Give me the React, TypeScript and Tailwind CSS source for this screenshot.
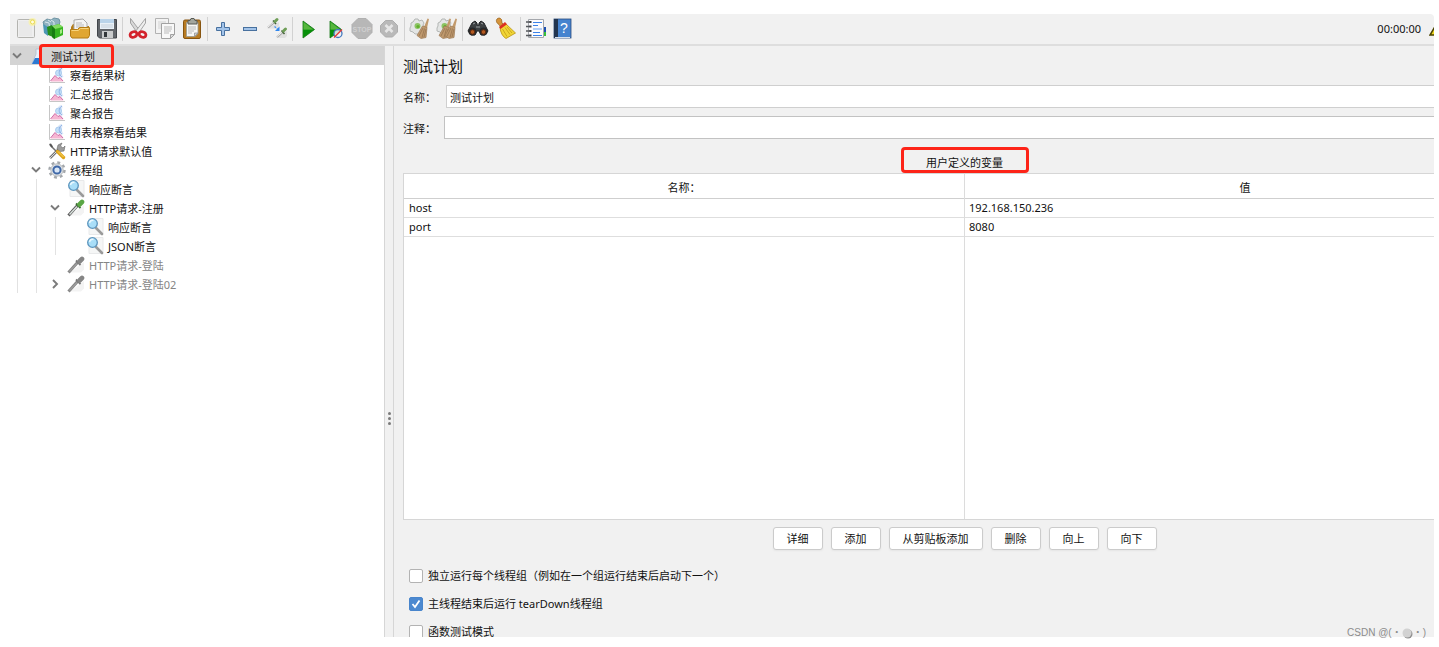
import { useState, type ReactNode } from "react";

function Svg({ children, size = 24 }: { children: ReactNode; size?: number }) {
  return (
    <svg width={size} height={size} viewBox={`0 0 ${size} ${size}`} fill="none" className="block shrink-0" aria-hidden="true">
      {children}
    </svg>
  );
}

/* ---------- toolbar icons (24 x 24) ---------- */

const NewIcon = () => (
  <Svg>
    <rect x="3.5" y="2.5" width="17" height="18" rx="1" fill="#efefef" stroke="#b4b4b0" />
    <path d="M5 4h13v15H5z" fill="#e9e9e9" />
    <circle cx="18.5" cy="5" r="4" fill="#fbf3a0" opacity=".7" />
    <circle cx="18.5" cy="5" r="2" fill="#fffde0" stroke="#eedc4e" />
  </Svg>
);

const TemplatesIcon = () => (
  <Svg>
    <path d="M2 5l4-3 4 1 3-2 5 1 1 3-2 6-6 4-6-1z" fill="#8fb2c0" stroke="#6f94a3" />
    <path d="M4 5l4 1 1 7M10 3l3 2v6M7 3l3 2" stroke="#d9e8ee" />
    <path d="M2 7l5 3v9l-4-3z" fill="#4d97b5" />
    <path d="M6 10l5-2 1 12-5-2z" fill="#25901b" />
    <path d="M11 9l7-2 4 3v8l-9 4-2-2z" fill="#36b421" />
    <path d="M11 9l7-2 4 3-8 2z" fill="#84db62" />
    <path d="M11 9l3 3v10l-3-2z" fill="#177b12" />
    <path d="M19 13l2-1v4l-2 1z" fill="#a4ec85" />
  </Svg>
);

const OpenIcon = () => (
  <Svg>
    <path d="M3 10l2-3h5l2 2h9v11H3z" fill="#b57d18" />
    <path d="M6 3l9-1 4 4v9H6z" fill="#f4f4f4" stroke="#aaa" />
    <path d="M8 6h6M8 8h8M8 10h8" stroke="#bbb" />
    <path d="M2.500 12.500h7l2-2h10v8l-1.500 2.500h-16l-1.500-2z" fill="#e0a632" stroke="#b47c14" />
    <path d="M3.500 13.500h7l2-2h8" stroke="#f7d47d" />
  </Svg>
);

const SaveIcon = () => (
  <Svg>
    <path d="M2.500 2.500h19v18.500h-17l-2-2z" fill="#62666b" stroke="#42464b" />
    <rect x="5" y="2" width="14" height="10" fill="#e9f1f8" />
    <path d="M5 2h14v4H5z" fill="#bad4ea" />
    <path d="M6 8h12M6 10h12" stroke="#c5d0da" />
    <rect x="7" y="14" width="11" height="7" fill="#c9cbcc" />
    <rect x="9" y="15" width="3" height="5" fill="#33373b" />
  </Svg>
);

const CutIcon = () => (
  <Svg>
    <path d="M4.500 1.500l10 13-2.500 2.500L4.500 6z" fill="#d8d8d8" stroke="#919191" strokeWidth=".8" />
    <path d="M19.500 1.500L9.500 14.500l2.500 2.500L19.500 6z" fill="#eee" stroke="#919191" strokeWidth=".8" />
    <ellipse cx="7.500" cy="17.500" rx="3.500" ry="2.600" transform="rotate(-20 7.500 17.500)" stroke="#d3222c" strokeWidth="2.800" />
    <ellipse cx="16.500" cy="17.500" rx="3.500" ry="2.600" transform="rotate(20 16.500 17.500)" stroke="#d3222c" strokeWidth="2.800" />
  </Svg>
);

const CopyIcon = () => (
  <Svg>
    <path d="M2.500 1.500h13v15h-13z" fill="#f3f3f3" stroke="#b2b2b2" />
    <path d="M5 5h8M5 7h8M5 9h5M5 11h5" stroke="#d3d3d3" />
    <path d="M8.500 6.500h13v11l-4 4h-9z" fill="#f8f8f8" stroke="#a2a2a2" />
    <path d="M11 10h8M11 12h8M11 14h7M11 16h5" stroke="#bbb" />
    <path d="M21.500 17.500h-4v4z" fill="#ddd" stroke="#a2a2a2" />
  </Svg>
);

const PasteIcon = () => (
  <Svg>
    <rect x="3.500" y="3" width="17" height="18.500" rx="1.500" fill="#b87b22" stroke="#875510" />
    <path d="M6.500 5.500h11.500v11l-3 3H6.500z" fill="#f7f7f5" stroke="#9a9a90" strokeWidth=".8" />
    <path d="M8 10h8M8 12h8M8 14h6M8 16h4" stroke="#b9b9b9" />
    <path d="M18 16h-3.500v3.500z" fill="#d5d5d5" stroke="#888" strokeWidth=".7" />
    <path d="M8 3.500h2l1-2h3l1 2h2V7H8z" fill="#a3a69e" stroke="#595b55" />
  </Svg>
);

const PlusIcon = () => (
  <Svg>
    <path d="M10.500 5.500h3v5h5v3h-5v5h-3v-5h-5v-3h5z" fill="#a2c3e9" stroke="#48719f" />
  </Svg>
);

const MinusIcon = () => (
  <Svg>
    <rect x="5.500" y="10.500" width="13" height="3" fill="#a2c3e9" stroke="#48719f" />
  </Svg>
);

const ToggleIcon = () => (
  <Svg>
    <path d="M2 11.500h10l2-2.500V5z" fill="#e0e0e0" />
    <path d="M11 21h9l2-2v-5z" fill="#e0e0e0" />
    <path d="M3 10.500L9 5.500" stroke="#a9a9a9" strokeWidth="2" />
    <path d="M3 10l6-5" stroke="#f4f4f4" />
    <path d="M8 3.500l3 3.500" stroke="#3f5d34" strokeWidth="1.500" />
    <path d="M10 4.500l2-2" stroke="#6f9e57" strokeWidth="3" strokeLinecap="round" />
    <path d="M12 20l6-5" stroke="#a9a9a9" strokeWidth="2" />
    <path d="M12 19.500l6-5" stroke="#f4f4f4" />
    <path d="M16.500 13.500l3 3.500" stroke="#3f5d34" strokeWidth="1.500" />
    <path d="M18.500 14l2-2" stroke="#6f9e57" strokeWidth="3" strokeLinecap="round" />
    <path d="M9.500 9.500l3 2.500" stroke="#4b94ef" strokeWidth="1.300" strokeDasharray="2 1" />
    <path d="M14.500 9.500v4.500H10z" fill="#2f86ee" />
  </Svg>
);

const PlayShape = () => (
  <>
    <path d="M7 4l11.500 8.500L7 21z" fill="#189c18" stroke="#137413" strokeWidth=".8" />
    <path d="M7.500 5l9.500 7.500H7.500z" fill="#56b63e" />
    <path d="M7.500 13h10L7.500 20z" fill="#068f08" />
  </>
);

const StartIcon = () => (
  <Svg>
    <PlayShape />
  </Svg>
);

const StartNoPauseIcon = () => (
  <Svg>
    <PlayShape />
    <circle cx="15" cy="16.500" r="4" fill="#f2f2f8" fillOpacity=".85" stroke="#4379bd" strokeWidth="1.300" />
    <path d="M11 20.500l8-8" stroke="#e23b36" strokeWidth="1.500" />
  </Svg>
);

const StopIcon = () => (
  <Svg>
    <path d="M8 1.500h8l6 6v8l-6 6H8l-6-6v-8z" fill="#b7b7b7" stroke="#b0b0b0" />
    <text x="12" y="14.500" textAnchor="middle" fontSize="7" fontWeight="700" fontFamily="Liberation Sans, sans-serif" fill="#cfcfcf">
      STOP
    </text>
  </Svg>
);

const ShutdownIcon = () => (
  <Svg>
    <path d="M8.500 3.500h7l5 5v6.500l-5 5h-7l-5-5V8.500z" fill="#b9b9b9" stroke="#adadad" />
    <path d="M8.500 8l7 7M15.500 8l-7 7" stroke="#e6e6e6" strokeWidth="2.600" />
  </Svg>
);

const Broom = ({ dx }: { dx: number }) => (
  <g transform={`translate(${dx} 0)`}>
    <path d="M18.500 1.500l1.500.500-2 9-3-1z" fill="#c29a6c" />
    <path d="M13.500 9l4.500 1.500-1 10-5 1-4-3z" fill="#c09a6e" stroke="#9c7a54" strokeWidth=".7" />
    <path d="M14 11l-4 8M15.500 11.500l-2.500 9M17 12l-2 8" stroke="#8f6f4c" strokeWidth=".7" />
  </g>
);

const Gear = () => (
  <>
    <path d="M3 6l2-1 2-3h3l1 2 3-1 2 3-1 2 2 3-2 3-3 1-2 2H7l-2-2-3-1V11l1-2z" fill="#e3e5e4" stroke="#b3b6b4" />
    <circle cx="9.500" cy="9" r="3" fill="#8cc464" />
    <circle cx="10" cy="9.500" r="1.600" fill="#5fb02a" />
  </>
);

const ClearIcon = () => (
  <Svg>
    <Gear />
    <Broom dx={1} />
  </Svg>
);

const ClearAllIcon = () => (
  <Svg>
    <Gear />
    <Broom dx={-4} />
    <Broom dx={2} />
  </Svg>
);

const SearchIcon = () => (
  <Svg>
    <path d="M6 6l3-2 2 2v2h2V6l2-2 3 2 4 8-3 4h-4l-2-4h-2l-2 4H5l-3-4z" fill="#3d4042" stroke="#242628" />
    <path d="M7 7l2-1M15 6l2 1M10 10h4" stroke="#9ba0a2" />
    <circle cx="6.500" cy="14.500" r="4" fill="#26282a" />
    <circle cx="17.500" cy="14.500" r="4" fill="#26282a" />
    <circle cx="6.500" cy="15" r="2.300" fill="#b45a20" stroke="#5c2a10" />
    <circle cx="17.500" cy="15" r="2.300" fill="#b45a20" stroke="#5c2a10" />
  </Svg>
);

const ResetSearchIcon = () => (
  <Svg>
    <path d="M4 2c1.500-1.500 3.500-1 4.500.500L9 6l2 2-3 2.500-2-3C4 6.500 2.500 4 4 2z" fill="#d5943c" stroke="#9c6420" strokeWidth=".8" />
    <path d="M7 10.500l5.500-4 10 9.500-9.500 5.500c-3.500-2-5.500-6-6-11z" fill="#f1d637" stroke="#b79210" strokeWidth=".8" />
    <path d="M9.500 12l4.500 7.500M12 10.500l5 7M14 10l5 6" stroke="#cba81e" />
    <path d="M6 10l6-5 2 2.200-6.500 4.800z" fill="#dc3022" />
  </Svg>
);

const FunctionHelperIcon = () => (
  <Svg>
    <path d="M4.500 2.500h15v18h-15z" fill="#fbfbfd" stroke="#a4a7ac" />
    <path d="M2 5h4M2 9.500h4M2 14h4M2 18.500h4" stroke="#55585c" strokeWidth="1.300" />
    <path d="M5.500 4h2v2h-2zM5.500 8.500h2v2h-2zM5.500 13h2v2h-2zM5.500 17.500h2v2h-2z" fill="#3c3f43" />
    <path d="M9 5.500h9M9 8.500h5M9 15.500h7M9 18.500h9" stroke="#3b82e8" strokeWidth="1.200" />
    <path d="M9 12h9" stroke="#9cc2f5" strokeWidth="1.500" />
    <path d="M20 10h2v5h-2z" fill="#1c4fb0" />
    <path d="M20 15h2v4h-2z" fill="#35c03a" />
  </Svg>
);

const HelpIcon = () => (
  <Svg>
    <rect x="3" y="2" width="17" height="19" fill="#4583cf" stroke="#2b4d7d" strokeWidth=".8" />
    <path d="M3 2h4v19H3z" fill="#22354f" />
    <path d="M4 21h15v-1H4z" fill="#d8e1ec" />
    <text x="13" y="16" textAnchor="middle" fontSize="14" fontFamily="Liberation Sans, sans-serif" fill="#fff">
      ?
    </text>
  </Svg>
);

/* ---------- tree icons (18 x 18) ---------- */

const FlaskIcon = () => (
  <Svg size={18}>
    <path d="M7 2h4v5l5 9.500H3L7 7z" fill="#e8f1fb" stroke="#b7c5d4" />
    <path d="M6 11h7l3 6H3z" fill="#2e79d2" />
  </Svg>
);

const ReportIcon = () => (
  <Svg size={18}>
    <path d="M1.500 1v15.500H17" stroke="#c6c6c6" />
    <path d="M10.500 2.500c2-2 4-1.500 4 .500l-1 4 2 4-3 1-3-3z" fill="#dce8f8" />
    <circle cx="10.500" cy="7" r="3" fill="#c4e0f8" stroke="#9fc3ea" strokeWidth=".8" />
    <path d="M14 2c-3.500 2-4 6.500 0 9" stroke="#8bafe6" />
    <path d="M2.500 15.500L7 9.500l3 3 2-1 3.500 4z" fill="#f6b6d2" />
    <path d="M2.500 15L7 9.500l3 3 2-1 3 3.500" stroke="#cf6ba6" />
  </Svg>
);

const ToolsIcon = () => (
  <Svg size={18}>
    <path d="M2 16l9-9" stroke="#757575" strokeWidth="2.600" />
    <path d="M2 16l9-9" stroke="#d9d9d9" />
    <path d="M10 3l4-2-1.500 3L15 6l2-2-1 5-4 .5L9 7z" fill="#9c9c9c" stroke="#666" strokeWidth=".6" />
    <path d="M2 3l7 7" stroke="#6d6d6d" strokeWidth="1.500" />
    <path d="M1 2l2-.5 2 3-1.500 1z" fill="#555" />
    <path d="M9.500 9.500l6 6" stroke="#e0a51a" strokeWidth="3.400" strokeLinecap="round" />
    <path d="M10 9.500l5.500 5.500" stroke="#f8d865" />
  </Svg>
);

const ThreadGroupIcon = () => (
  <Svg size={18}>
    <circle cx="9" cy="9" r="7.500" stroke="#a3a7ab" strokeWidth="2.400" strokeDasharray="2.900 3" />
    <circle cx="9" cy="9" r="6.200" fill="#dfe2e4" stroke="#a9adb1" strokeWidth=".8" />
    <circle cx="9" cy="9" r="3.600" fill="#d8e6f6" stroke="#3f68a8" strokeWidth="2" />
  </Svg>
);

const AssertionIcon = () => (
  <Svg size={18}>
    <path d="M3 .5h14v16H3z" fill="#f5f6f6" stroke="#e8e9ea" />
    <path d="M10 10l6 6" stroke="#9a9a9a" strokeWidth="2.600" strokeLinecap="round" />
    <circle cx="6.500" cy="5.500" r="4.800" fill="#a9def8" stroke="#5b94bd" strokeWidth="1.300" />
    <path d="M3.500 5c.5-2 2-3 4-2.500" stroke="#e9f8ff" strokeWidth="1.500" />
  </Svg>
);

const SamplerIcon = ({ disabled = false }: { disabled?: boolean }) => (
  <Svg size={18}>
    <path d="M3 16.500h11l3-3V6z" fill="#f3f3f3" />
    <path d="M1.500 16.500l9-10" stroke={disabled ? "#868686" : "#5c5c5c"} strokeWidth="3" />
    <path d="M2.500 15.500l7.500-8" stroke={disabled ? "#9c9c9c" : "#d9e2dd"} strokeWidth="1.400" />
    <path d="M9 4.500l4.500 4.500" stroke={disabled ? "#767676" : "#3c6a34"} strokeWidth="1.800" />
    <path d="M12.500 5.500l2.500-2.500" stroke={disabled ? "#858585" : "#5aa644"} strokeWidth="4.600" strokeLinecap="round" />
  </Svg>
);

/* ---------- toolbar ---------- */

const toolGroups: { label: string; icon: ReactNode; disabled?: boolean }[][] = [
  [
    { label: "新建", icon: <NewIcon /> },
    { label: "模板", icon: <TemplatesIcon /> },
    { label: "打开", icon: <OpenIcon /> },
    { label: "保存", icon: <SaveIcon /> },
  ],
  [
    { label: "剪切", icon: <CutIcon /> },
    { label: "复制", icon: <CopyIcon /> },
    { label: "粘贴", icon: <PasteIcon /> },
  ],
  [
    { label: "全部展开", icon: <PlusIcon /> },
    { label: "全部折叠", icon: <MinusIcon /> },
    { label: "切换", icon: <ToggleIcon /> },
  ],
  [
    { label: "启动", icon: <StartIcon /> },
    { label: "不停顿开始", icon: <StartNoPauseIcon /> },
    { label: "停止", icon: <StopIcon />, disabled: true },
    { label: "关闭", icon: <ShutdownIcon />, disabled: true },
  ],
  [
    { label: "清除", icon: <ClearIcon /> },
    { label: "清除全部", icon: <ClearAllIcon /> },
  ],
  [
    { label: "搜索", icon: <SearchIcon /> },
    { label: "重置搜索", icon: <ResetSearchIcon /> },
  ],
  [
    { label: "函数助手", icon: <FunctionHelperIcon /> },
    { label: "帮助", icon: <HelpIcon /> },
  ],
];

function Toolbar() {
  return (
    <header className="flex h-8 shrink-0 items-center overflow-hidden rounded-tr border-b-2 border-[#dedede] bg-[#f1f1f1] pl-[2px]">
      {toolGroups.map((group, i) => (
        <div key={i} className="flex items-center">
          {i > 0 && (
            <div className="flex w-1 justify-center">
              <div className="h-6 w-px bg-[#d2d2d2]" />
            </div>
          )}
          {group.map((tool) => (
            <button key={tool.label} type="button" aria-label={tool.label} disabled={tool.disabled} className="flex w-[27px] justify-center">
              {tool.icon}
            </button>
          ))}
        </div>
      ))}
      <div className="ml-auto flex items-center gap-2">
        <span>00:00:00</span>
        <div className="w-[5px] overflow-hidden">
          <Svg size={16}>
            <path d="M8 2l7 12H1z" fill="#ecd51f" stroke="#4a4300" strokeWidth="1.500" />
          </Svg>
        </div>
      </div>
    </header>
  );
}

/* ---------- tree ---------- */

type Node = {
  label: string;
  icon: ReactNode;
  depth: number;
  state?: "open" | "closed";
  disabled?: boolean;
  selected?: boolean;
};

const nodes: Node[] = [
  { label: "测试计划", icon: <FlaskIcon />, depth: 0, state: "open", selected: true },
  { label: "察看结果树", icon: <ReportIcon />, depth: 1 },
  { label: "汇总报告", icon: <ReportIcon />, depth: 1 },
  { label: "聚合报告", icon: <ReportIcon />, depth: 1 },
  { label: "用表格察看结果", icon: <ReportIcon />, depth: 1 },
  { label: "HTTP请求默认值", icon: <ToolsIcon />, depth: 1 },
  { label: "线程组", icon: <ThreadGroupIcon />, depth: 1, state: "open" },
  { label: "响应断言", icon: <AssertionIcon />, depth: 2 },
  { label: "HTTP请求-注册", icon: <SamplerIcon />, depth: 2, state: "open" },
  { label: "响应断言", icon: <AssertionIcon />, depth: 3 },
  { label: "JSON断言", icon: <AssertionIcon />, depth: 3 },
  { label: "HTTP请求-登陆", icon: <SamplerIcon disabled />, depth: 2, disabled: true },
  { label: "HTTP请求-登陆02", icon: <SamplerIcon disabled />, depth: 2, state: "closed", disabled: true },
];

function TreeRow({ node }: { node: Node }) {
  return (
    <li className={`flex h-[19px] items-center whitespace-nowrap ${node.selected ? "bg-[#d4d4d4]" : ""}`}>
      {Array.from({ length: node.depth }, (_, i) => (
        <div key={i} className="flex h-full w-[19px] pl-[7px]">
          <div className="w-px bg-[#e2e2e2]" />
        </div>
      ))}
      <div className="flex w-[19px] pl-[2px]">
        {node.state && (
          <button type="button" aria-label={node.label} aria-expanded={node.state === "open"}>
            <Svg size={10}>
              <path d={node.state === "open" ? "M1 2.500l4 4 4-4" : "M3 1l4 4-4 4"} stroke="#7b7b7b" strokeWidth="1.900" />
            </Svg>
          </button>
        )}
      </div>
      {node.icon}
      <span className={`relative ml-1 pt-[2px] ${node.disabled ? "text-[#858585]" : ""}`}>
        {node.selected && <span className="absolute -top-[3px] -left-3 h-6 w-[75px] rounded-sm border-3 border-[#fd2418] bg-[#d4d4d4]" />}
        <span className="relative">{node.label}</span>
      </span>
    </li>
  );
}

/* ---------- editor ---------- */

const variables = [
  { name: "host", value: "192.168.150.236" },
  { name: "port", value: "8080" },
];

const actions = ["详细", "添加", "从剪贴板添加", "删除", "向上", "向下"];

function Option({ label, initial = false }: { label: string; initial?: boolean }) {
  const [checked, setChecked] = useState(initial);
  return (
    <label className="flex h-7 items-center gap-[5px]">
      <span className="relative flex size-[14px]">
        <input
          type="checkbox"
          checked={checked}
          onChange={(e) => setChecked(e.target.checked)}
          className="size-full appearance-none rounded-[2px] border border-[#b3b3b3] bg-white checked:border-[#4885cc] checked:bg-[#4c89d0]"
        />
        {checked && (
          <span className="pointer-events-none absolute inset-0">
            <Svg size={14}>
              <path d="M3.500 7l2.500 3 4.500-6.500" stroke="#fff" strokeWidth="1.800" />
            </Svg>
          </span>
        )}
      </span>
      {label}
    </label>
  );
}

function PlanEditor() {
  return (
    <main className="min-w-0 flex-1 overflow-hidden bg-[#f1f1f1]">
      {/* The form is wider than its viewport and runs on under the right edge. */}
      <div className="flex h-full w-[110%] flex-col pr-3 pl-[9px]">
        <h1 className="mt-2 text-[15px] leading-6">测试计划</h1>
        <div className="mt-[7px] flex items-center">
          <label htmlFor="plan-name" className="w-[43px] pt-[2px]">
            名称：
          </label>
          <input id="plan-name" defaultValue="测试计划" className="h-[23px] min-w-0 flex-1 border border-[#cfcfcf] bg-white px-[3px]" />
        </div>
        <div className="mt-2 flex items-center">
          <label htmlFor="plan-comment" className="w-[41px] pt-[2px]">
            注释：
          </label>
          <input id="plan-comment" className="h-[23px] min-w-0 flex-1 border border-[#c2c2c2] bg-white px-[3px]" />
        </div>
        <div className="mt-[14px] flex justify-center">
          <h2 className="relative leading-5">
            <span className="absolute -top-[6px] -left-[25px] h-[26px] w-32 rounded-sm border-3 border-[#fd2418]" />
            用户定义的变量
          </h2>
        </div>
        <div className="flex min-h-0 flex-1 border border-[#d6d6d6] bg-white">
          <table className="w-full table-fixed border-collapse">
            <thead>
              <tr className="h-6 border-b border-[#cfcfcf]">
                <th className="w-1/2 border-r border-[#dcdcdc] p-0 pt-1 font-normal">名称：</th>
                <th className="p-0 pt-1 font-normal">值</th>
              </tr>
            </thead>
            <tbody>
              {variables.map((v) => (
                <tr key={v.name} className="h-[19px] border-b border-[#dedede]">
                  <td className="border-r border-[#dcdcdc] px-[5px] py-0">{v.name}</td>
                  <td className="px-1 py-0">{v.value}</td>
                </tr>
              ))}
              <tr>
                <td className="border-r border-[#dcdcdc] p-0" />
                <td className="p-0" />
              </tr>
            </tbody>
          </table>
        </div>
        <div className="mt-[7px] flex justify-center gap-2">
          {actions.map((a) => (
            <button key={a} type="button" className="h-[23px] rounded-[3px] border border-[#cbcbcb] bg-white px-[13px] shadow-xs">
              {a}
            </button>
          ))}
        </div>
        <div className="mt-3 h-[75px] pl-[6px]">
          <Option label="独立运行每个线程组（例如在一个组运行结束后启动下一个）" />
          <Option label="主线程结束后运行 tearDown线程组" initial />
          <Option label="函数测试模式" />
        </div>
      </div>
    </main>
  );
}

export default function App() {
  return (
    <div className="h-screen bg-white pt-[14px] pr-[5px] pb-[10px] pl-[10px] font-['Noto_Sans','Noto_Sans_CJK_SC',sans-serif] text-[11px] leading-4 text-[#111]">
      <div className="relative flex h-full flex-col">
        <Toolbar />
        <div className="flex min-h-0 flex-1">
          <nav className="w-[374px] shrink-0 bg-white">
            <ul>
              {nodes.map((n, i) => (
                <TreeRow key={i} node={n} />
              ))}
            </ul>
          </nav>
          <div className="flex w-[10px] shrink-0 flex-col items-center justify-center gap-[2px] border-x border-[#d6d6d6] bg-[#f1f1f1] pt-[153px]">
            <span className="size-[3px] rounded-full bg-[#7a7a7a]" />
            <span className="size-[3px] rounded-full bg-[#7a7a7a]" />
            <span className="size-[3px] rounded-full bg-[#7a7a7a]" />
          </div>
          <PlanEditor />
        </div>
        <div className="absolute right-2 -bottom-1 flex items-center font-['Liberation_Sans','Noto_Sans_CJK_SC',sans-serif] text-[10px] text-[#8c8c8c]">
          CSDN @(・
          <svg width="11" height="11" viewBox="0 0 11 11" aria-hidden="true">
            <circle cx="6" cy="6" r="4.500" fill="#8f8f8f" />
            <circle cx="5" cy="5" r="4.500" fill="#d2d2d2" />
          </svg>
          ・)
        </div>
      </div>
    </div>
  );
}
